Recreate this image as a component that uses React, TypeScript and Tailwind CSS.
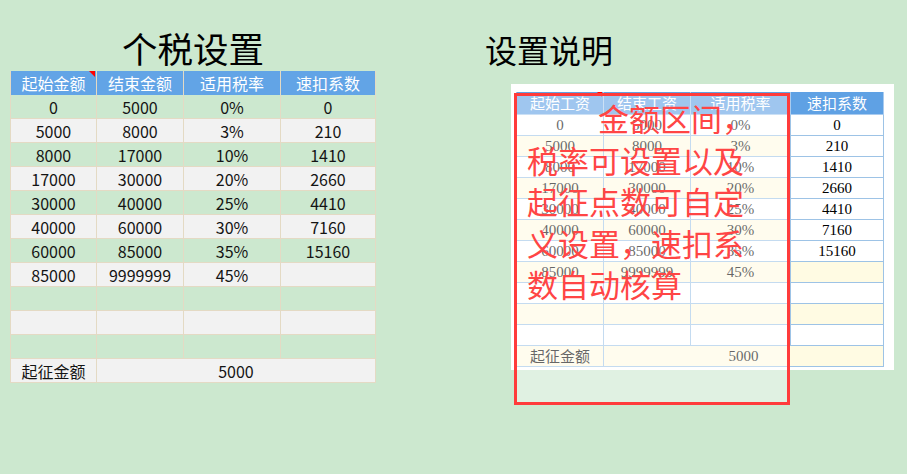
import React from "react";

const rows: string[][] = [
  ["0", "5000", "0%", "0"],
  ["5000", "8000", "3%", "210"],
  ["8000", "17000", "10%", "1410"],
  ["17000", "30000", "20%", "2660"],
  ["30000", "40000", "25%", "4410"],
  ["40000", "60000", "30%", "7160"],
  ["60000", "85000", "35%", "15160"],
  ["85000", "9999999", "45%", ""],
  ["", "", "", ""],
  ["", "", "", ""],
  ["", "", "", ""],
];

const cjk = { fontFamily: '"Noto Sans CJK SC", "Noto Sans", sans-serif' };
const serif = { fontFamily: '"Liberation Serif", "Noto Sans CJK SC", serif' };

function LeftTable() {
  const heads = ["起始金额", "结束金额", "适用税率", "速扣系数"];
  const cell = "h-[24px] flex items-center justify-center border-r border-b border-[#e4dac4]";
  return (
    <div className="grid grid-cols-[87px_87px_97px_95px] text-[16px] text-[#141414]" style={cjk}>
      {heads.map((h, i) => (
        <div
          key={h}
          className={`relative h-[24px] flex items-center justify-center bg-[#62a4e6] text-white border-r border-[#e4dac4] ${i === 0 ? "border-l" : ""}`}
        >
          {h}
          {i === 0 && (
            <span className="absolute top-0 right-[1px] w-0 h-0 border-t-[6px] border-l-[6px] border-t-[#ff0000] border-l-transparent" />
          )}
        </div>
      ))}
      {rows.map((r, ri) =>
        r.map((c, ci) => (
          <div
            key={`${ri}-${ci}`}
            className={`${cell} ${ri % 2 === 0 ? "bg-[#cce8cf]" : "bg-[#f2f2f2]"} ${ci === 0 ? "border-l" : ""}`}
          >
            {c}
          </div>
        ))
      )}
      <div className={`${cell} border-l bg-[#f2f2f2]`}>起征金额</div>
      <div className={`${cell} col-span-3 bg-[#f2f2f2]`}>5000</div>
    </div>
  );
}

function RightTable() {
  const heads = ["起始工资", "结束工资", "适用税率", "速扣系数"];
  const cell = "h-[21px] flex items-center justify-center border-r border-b border-[#9dc3e6]";
  return (
    <div className="grid grid-cols-[87px_87px_100px_93px] text-[15px] text-black border-l border-[#9dc3e6]" style={serif}>
      {heads.map((h, i) => (
        <div
          key={h}
          className="relative h-[23px] flex items-center justify-center bg-[#5fa1e4] text-white border-r border-b border-[#a9cbef] text-[15px]"
          style={cjk}
        >
          {h}
          {i === 0 && (
            <span className="absolute top-0 right-[1px] w-0 h-0 border-t-[5px] border-l-[5px] border-t-[#ff0000] border-l-transparent" />
          )}
        </div>
      ))}
      {rows.map((r, ri) =>
        r.map((c, ci) => {
          const yellow = ri % 2 === 1 && !(ci === 3 && ri < 7);
          return (
            <div key={`${ri}-${ci}`} className={`${cell} ${yellow ? "bg-[#fffbe3]" : "bg-white"}`}>
              {c}
            </div>
          );
        })
      )}
      <div className={`${cell} bg-[#fffbe3] text-[15px]`} style={cjk}>
        起征金额
      </div>
      <div className={`${cell} col-span-3 bg-[#fffbe3]`}>5000</div>
    </div>
  );
}

export default function App() {
  return (
    <div className="relative w-[907px] h-[474px] bg-[#cce8cf] flex overflow-hidden">
      <div className="ml-[10px] w-[366px] flex flex-col">
        <div className="mt-[30px] h-[36px] leading-none text-[35.5px] text-black text-center" style={cjk}>
          个税设置
        </div>
        <div className="mt-[5px]">
          <LeftTable />
        </div>
      </div>

      <div className="ml-[109px] flex flex-col">
        <div className="mt-[33px] h-[32px] leading-none text-[32px] text-black" style={cjk}>
          设置说明
        </div>
        <div className="mt-[19px] ml-[26px] w-[383px] h-[286px] bg-white pt-[8px] pl-[5px]">
          <RightTable />
        </div>
      </div>

      <div className="absolute left-[514px] top-[93px] w-[276px] h-[312px] border-[3px] border-[#ff3b3b] bg-white/40 pl-[10px] pt-[1px]">
        <div className="text-[31px] leading-[41.5px] text-[#ff4545] whitespace-nowrap" style={cjk}>
          <div className="pl-[71px]">金额区间，</div>
          <div>税率可设置以及</div>
          <div>起征点数可自定</div>
          <div>义设置，速扣系</div>
          <div>数自动核算</div>
        </div>
      </div>
    </div>
  );
}
